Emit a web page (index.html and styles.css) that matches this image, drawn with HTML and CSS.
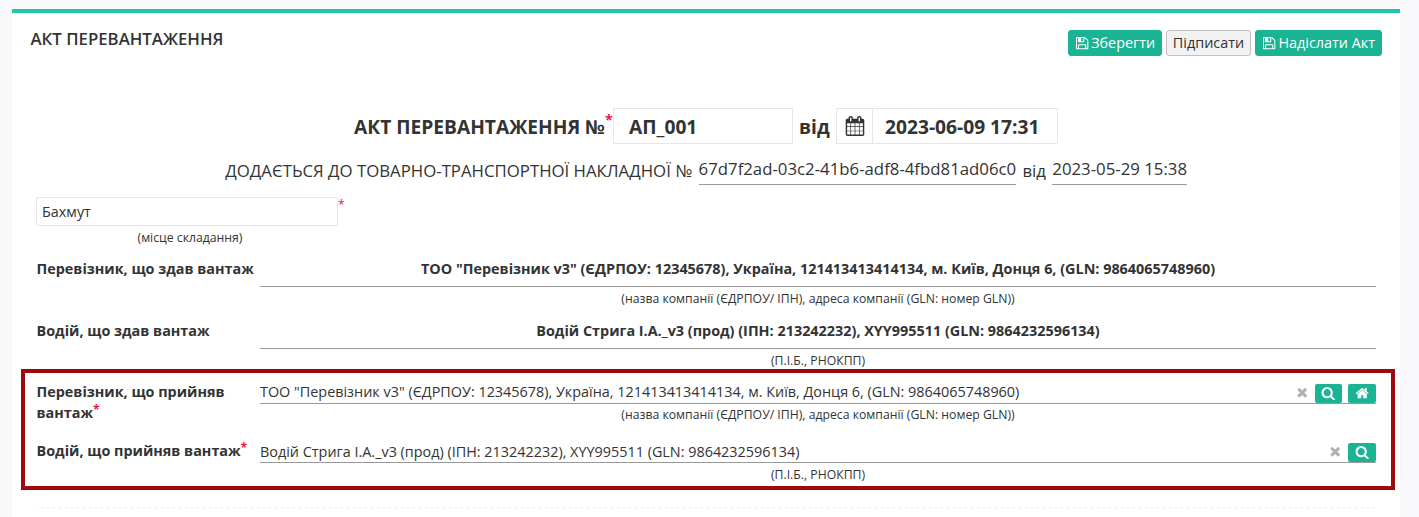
FILE: index.html
```html
<!DOCTYPE html>
<html lang="uk">
<head>
<meta charset="utf-8">
<title>Акт перевантаження</title>
<link rel="stylesheet" href="styles.css">
</head>
<body>
<svg class="sprite" viewBox="0 0 1792 1792">
<symbol id="save" viewBox="0 0 1792 1792"><path d="M512 1536h768v-384h-768v384zm896 0h128v-896q0-14-10-38.500t-20-34.500l-281-281q-10-10-34-20t-39-10v416q0 40-28 68t-68 28h-576q-40 0-68-28t-28-68v-416h-128v1280h128v-416q0-40 28-68t68-28h832q40 0 68 28t28 68v416zm-384-928v-320q0-13-9.500-22.500t-22.500-9.500h-192q-13 0-22.500 9.500t-9.500 22.500v320q0 13 9.500 22.500t22.500 9.500h192q13 0 22.500-9.500t9.500-22.500zm640 32v928q0 40-28 68t-68 28h-1344q-40 0-68-28t-28-68v-1344q0-40 28-68t68-28h928q40 0 88 20t76 48l280 280q28 28 48 76t20 88z"/></symbol>
<symbol id="calendar" viewBox="0 0 1792 1792"><path d="M192 1664h288v-288h-288v288zm352 0h320v-288h-320v288zm-352-352h288v-320h-288v320zm352 0h320v-320h-320v320zm-352-384h288v-288h-288v288zm736 736h320v-288h-320v288zm-384-736h320v-288h-320v288zm768 736h288v-288h-288v288zm-384-352h320v-320h-320v320zm-352-864v-288q0-13-9.500-22.500t-22.500-9.500h-64q-13 0-22.500 9.500t-9.500 22.500v288q0 13 9.500 22.500t22.500 9.500h64q13 0 22.500-9.500t9.500-22.500zm736 864h288v-320h-288v320zm-384-384h320v-288h-320v288zm384 0h288v-288h-288v288zm32-480v-288q0-13-9.500-22.500t-22.500-9.500h-64q-13 0-22.500 9.500t-9.500 22.500v288q0 13 9.500 22.500t22.500 9.500h64q13 0 22.500-9.500t9.500-22.500zm384-64v1280q0 52-38 90t-90 38h-1408q-52 0-90-38t-38-90v-1280q0-52 38-90t90-38h128v-96q0-66 47-113t113-47h64q66 0 113 47t47 113v96h384v-96q0-66 47-113t113-47h64q66 0 113 47t47 113v96h128q52 0 90 38t38 90z"/></symbol>
<symbol id="times" viewBox="0 0 1792 1792"><path d="M1490 1322q0 40-28 68l-136 136q-28 28-68 28t-68-28l-294-294-294 294q-28 28-68 28t-68-28l-136-136q-28-28-28-68t28-68l294-294-294-294q-28-28-28-68t28-68l136-136q28-28 68-28t68 28l294 294 294-294q28-28 68-28t68 28l136 136q28 28 28 68t-28 68l-294 294 294 294q28 28 28 68z"/></symbol>
<symbol id="search" viewBox="0 0 1792 1792"><path d="M1216 832q0-185-131.500-316.500t-316.500-131.500-316.500 131.500-131.500 316.500 131.500 316.500 316.500 131.500 316.500-131.500 131.500-316.500zm512 832q0 52-38 90t-90 38q-54 0-90-38l-343-342q-179 124-399 124-143 0-273.500-55.500t-225-150-150-225-55.500-273.500 55.500-273.500 150-225 225-150 273.500-55.500 273.500 55.500 225 150 150 225 55.500 273.500q0 220-124 399l343 343q37 37 37 90z"/></symbol>
<symbol id="home" viewBox="0 0 1792 1792"><path d="M1472 992v480q0 26-19 45t-45 19h-384v-384h-256v384h-384q-26 0-45-19t-19-45v-480q0-1 .5-3t.5-3l575-474 575 474q1 2 1 6zm223-69l-62 74q-8 9-21 11h-3q-13 0-21-7l-692-577-692 577q-12 8-24 7-13-2-21-11l-62-74q-8-10-7-23.500t11-21.500l719-599q32-26 76-26t76 26l244 204v-195q0-14 9-23t23-9h192q14 0 23 9t9 23v408l219 182q10 8 11 21.500t-7 23.500z"/></symbol>
</svg>
<main class="panel">
  <header class="panel-head">
    <h1 class="title">АКТ ПЕРЕВАНТАЖЕННЯ</h1>
    <div class="actions">
      <button class="btn primary save"><svg class="icon"><use href="#save"/></svg><span>Зберегти</span></button>
      <button class="btn sign">Підписати</button>
      <button class="btn primary send"><svg class="icon"><use href="#save"/></svg><span>Надіслати Акт</span></button>
    </div>
  </header>
  <div class="act">
    <span class="act-name">АКТ ПЕРЕВАНТАЖЕННЯ №</span><span class="req act-req">*</span>
    <div class="box number">АП_001</div>
    <span class="act-from">від</span>
    <div class="date"><span class="addon"><svg class="icon"><use href="#calendar"/></svg></span><span class="box stamp">2023-06-09 17:31</span></div>
  </div>
  <div class="invoice">
    <span class="invoice-name">ДОДАЄТЬСЯ ДО ТОВАРНО-ТРАНСПОРТНОЇ НАКЛАДНОЇ №</span>
    <span class="under">67d7f2ad-03c2-41b6-adf8-4fbd81ad06c0</span>
    <span class="invoice-from">від</span>
    <span class="under">2023-05-29 15:38</span>
  </div>
  <div class="place">
    <div class="box city">Бахмут</div><span class="req">*</span>
  </div>
  <div class="place-hint">(місце складання)</div>
  <div class="rows">
    <div class="row given">
      <div class="label">Перевізник, що здав вантаж</div>
      <div class="field"><div class="value">ТОО "Перевізник v3" (ЄДРПОУ: 12345678), Україна, 121413413414134, м. Київ, Донця 6, (GLN: 9864065748960)</div><div class="hint">(назва компанії (ЄДРПОУ/ ІПН), адреса компанії (GLN: номер GLN))</div></div>
    </div>
    <div class="row given">
      <div class="label">Водій, що здав вантаж</div>
      <div class="field"><div class="value">Водій Стрига І.А._v3 (прод) (ІПН: 213242232), XYY995511 (GLN: 9864232596134)</div><div class="hint">(П.І.Б., РНОКПП)</div></div>
    </div>
    <div class="row taken carrier">
      <div class="label">Перевізник, що прийняв вантаж<span class="req">*</span></div>
      <div class="field"><div class="value"><span class="text">ТОО "Перевізник v3" (ЄДРПОУ: 12345678), Україна, 121413413414134, м. Київ, Донця 6, (GLN: 9864065748960)</span><svg class="icon clear"><use href="#times"/></svg><button class="mini narrow"><svg class="icon"><use href="#search"/></svg></button><button class="mini"><svg class="icon"><use href="#home"/></svg></button></div><div class="hint">(назва компанії (ЄДРПОУ/ ІПН), адреса компанії (GLN: номер GLN))</div></div>
    </div>
    <div class="row taken driver">
      <div class="label">Водій, що прийняв вантаж<span class="req">*</span></div>
      <div class="field"><div class="value"><span class="text">Водій Стрига І.А._v3 (прод) (ІПН: 213242232), XYY995511 (GLN: 9864232596134)</span><svg class="icon clear"><use href="#times"/></svg><button class="mini"><svg class="icon"><use href="#search"/></svg></button></div><div class="hint">(П.І.Б., РНОКПП)</div></div>
    </div>
  </div>
  <div class="divider"></div>
  <div class="highlight"></div>
</main>
</body>
</html>
```
FILE: styles.css
```css
* { box-sizing: border-box; }
body {
  margin: 0;
  height: 517px;
  padding: 9px 19px 0 12px;
  overflow: hidden;
  background: #f9f9fb;
  color: #333;
  font: 14.4px/20px "Open Sans", sans-serif;
}
.sprite { display: none; }
.icon { display: block; width: 14.4px; height: 14.4px; fill: currentColor; flex: none; }
.panel { position: relative; height: 508px; background: #fff; border-top: 4px solid #23c6a8; white-space: nowrap; }
.panel-head { display: flex; justify-content: space-between; height: 95px; padding: 17px 18px 0; }
.title { margin: 0; padding-left: .5px; font-size: 16.8px; font-weight: 600; line-height: 18px; }
.actions { display: flex; gap: 4px; height: 26px; }
.btn {
  display: flex; align-items: center; justify-content: center; gap: 2px;
  padding: 0; border: 1px solid #c2c2c2; border-radius: 3px;
  background: #f2f2f2; color: #333; font: 14.4px/20px "Open Sans", sans-serif;
}
.primary { background: #1ab394; border-color: #1ab394; color: #fff; }
.save { width: 94px; }
.sign { width: 85px; }
.send { width: 127px; }
.box { border: 1px solid #e5e6e7; background: #fff; }
.req { color: #ed1940; }
.act { display: flex; height: 36px; padding-left: 342px; font-size: 19.2px; font-weight: 700; line-height: 37px; }
.act-name { width: 251px; }
.act-req { width: 8px; line-height: 24px; font-size: 14.4px; }
.number { width: 180px; padding-left: 15px; line-height: 35px; border-radius: 1px; }
.act-from { width: 43px; padding-left: 6px; }
.date { display: flex; }
.addon { display: flex; align-items: center; justify-content: center; width: 36px; border: 1px solid #e5e6e7; border-right: 0; }
.addon .icon { width: 20px; height: 20px; }
.stamp { width: 186px; padding-left: 12px; line-height: 35px; }
.invoice { display: flex; height: 41px; margin-top: 12px; padding-left: 213.3px; gap: 6.3px; font-size: 16.8px; line-height: 26px; }
.invoice-name, .invoice-from { padding-top: 2px; }
.under { height: 29px; border-bottom: 1px solid #999; }
.place { display: flex; height: 29px; padding-left: 24px; }
.city { width: 302px; padding-left: 5px; line-height: 27px; border-radius: 2px; }
.place .req { font-size: 12.240px; line-height: 16px; }
.place-hint { width: 308px; margin: 3px 0 0 24px; text-align: center; font-size: 12.240px; line-height: 18px; }
.rows { padding: 12px 24px 0; }
.row { display: grid; grid-template-columns: 224px 1fr; }
.label { padding-left: .5px; font-weight: 700; white-space: normal; }
.hint { text-align: center; font-size: 12.240px; line-height: 18px; }
.given { height: 62px; }
.given .value { height: 28px; border-bottom: 1px solid #999; font-weight: 700; text-align: center; }
.given .hint { margin-top: 3px; }
.label .req { font-size: 12.240px; line-height: 0; vertical-align: 4px; }
.taken .label { line-height: 21px; padding-right: 6px; margin-top: -2px; }
.taken .value { display: flex; height: 21px; border-bottom: 1px solid #999; }
.taken .text { flex: 1; line-height: 18px; }
.taken .hint { margin-top: 2px; }
.carrier { height: 59px; }
.driver { height: 65px; }
.driver .text { line-height: 20px; }
.driver .hint { margin-top: 3px; }
.clear { margin: 2px 5.6px 0 0; color: #afb2b3; }
.mini { display: flex; align-items: center; justify-content: center; width: 28px; height: 19px; margin-top: 1px; padding: 0 0 1px; border: 0; border-radius: 2px; background: #1ab394; color: #fff; }
.narrow { width: 27px; margin-right: 6px; }
.divider { height: 1px; margin: 0 24px; background: repeating-linear-gradient(90deg, #e7eaec 0 1px, transparent 1px 5px, #e7eaec 5px 6px); }
.highlight { position: absolute; left: 9px; top: 356px; width: 1374px; height: 121px; border: 4px solid #9c0a0e; }
```
